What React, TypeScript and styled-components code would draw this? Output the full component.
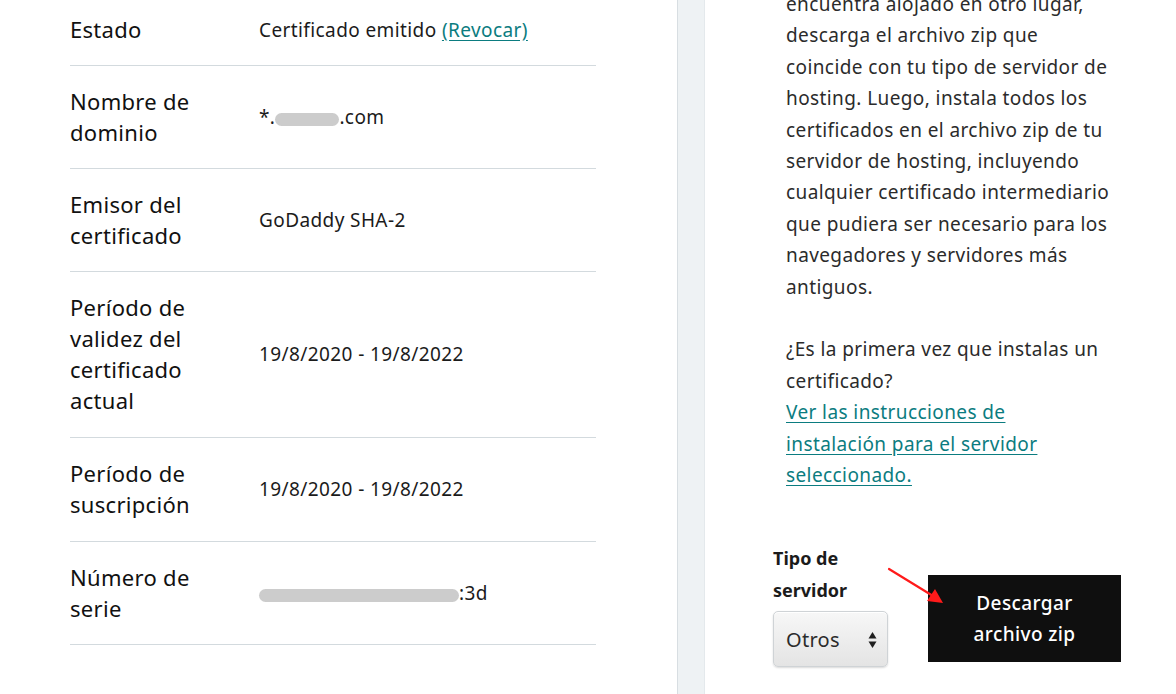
import styled, { createGlobalStyle } from "styled-components";

const GlobalStyle = createGlobalStyle`
  html, body {
    margin: 0;
    padding: 0;
    background: #ffffff;
    overflow: hidden;
  }
  body {
    font-family: "Noto Sans", "Liberation Sans", sans-serif;
    color: #111111;
  }
`;

const Page = styled.div`
  display: flex;
  height: 694px;
  overflow: hidden;
`;

const DetailsPanel = styled.section`
  flex: 0 0 677px;
  box-sizing: border-box;
  padding: 0 81px 0 70px;
`;

const DetailsList = styled.div`
  margin-top: -6px;
`;

const Row = styled.div<{ $tall?: boolean }>`
  display: grid;
  grid-template-columns: 189px 1fr;
  align-items: center;
  padding: 20px 0 ${(p) => (p.$tall ? 21 : 20)}px;
  border-bottom: 1px solid #d3dade;
`;

const Label = styled.div`
  width: 150px;
  font-size: 22px;
  letter-spacing: 0.3px;
  line-height: 31px;
  color: #111111;
`;

const Value = styled.div`
  font-size: 19px;
  letter-spacing: 0.4px;
  line-height: 26px;
  color: #1b1b1b;
`;

const TextLink = styled.a`
  color: #0b7c80;
  text-decoration: underline;
  text-underline-offset: 3px;
  cursor: pointer;
`;

const Redacted = styled.span<{ $width: number }>`
  display: inline-block;
  width: ${(p) => p.$width}px;
  height: 13px;
  border-radius: 7px;
  background: #cccccc;
  vertical-align: -2px;
`;

const Divider = styled.div`
  flex: 0 0 28px;
  background: #eef2f4;
  border-left: 1px solid #d8dee2;
  border-right: 1px solid #e4e9ec;
  box-sizing: border-box;
`;

const InstallPanel = styled.section`
  position: relative;
  flex: 1;
  padding-left: 68px;
`;

const Copy = styled.div`
  padding-left: 13px;
  margin-top: -11px;
  font-size: 19px;
  letter-spacing: 0.4px;
  line-height: 31.4px;
  color: #2b2b2b;
`;

const Paragraph = styled.p`
  margin: 0 0 31.4px;
`;

const FormRow = styled.div`
  display: flex;
  align-items: flex-end;
  gap: 40px;
  margin-top: 51px;
`;

const Field = styled.label`
  display: flex;
  flex-direction: column;
  width: 115px;
`;

const FieldLabel = styled.span`
  font-size: 18px;
  line-height: 32px;
  font-weight: 700;
  color: #1b1b1b;
  margin-bottom: 5px;
`;

const SelectBox = styled.div`
  position: relative;
  height: 56px;
  box-sizing: border-box;
  border: 1px solid #cfd3d6;
  border-radius: 5px;
  background: linear-gradient(#f7f7f7, #e4e4e4);
  box-shadow: inset 0 1px 0 #ffffff, 0 1px 2px rgba(0, 0, 0, 0.15);
`;

const Select = styled.select`
  appearance: none;
  width: 100%;
  height: 100%;
  border: none;
  background: transparent;
  padding: 0 0 0 12px;
  font-family: inherit;
  font-size: 20px;
  letter-spacing: 0.3px;
  color: #2b2b2b;
  outline: none;
`;

const Chevrons = styled.svg`
  position: absolute;
  right: 10px;
  top: 18px;
  pointer-events: none;
`;

const DownloadButton = styled.button`
  width: 193px;
  height: 87px;
  margin-bottom: 5px;
  border: none;
  background: #0f0f0f;
  color: #ffffff;
  font-family: inherit;
  font-size: 19px;
  letter-spacing: 0.4px;
  font-weight: 500;
  line-height: 31px;
  padding: 0 26px;
  cursor: pointer;
`;

const Annotation = styled.svg`
  position: absolute;
  left: 182px;
  top: 566px;
  pointer-events: none;
`;

export default function App() {
  return (
    <>
      <GlobalStyle />
      <Page>
        <DetailsPanel>
          <DetailsList>
            <Row>
              <Label>Estado</Label>
              <Value>
                Certificado emitido <TextLink>(Revocar)</TextLink>
              </Value>
            </Row>
            <Row>
              <Label>Nombre de dominio</Label>
              <Value>
                *.<Redacted $width={64} />.com
              </Value>
            </Row>
            <Row>
              <Label>Emisor del certificado</Label>
              <Value>GoDaddy SHA-2</Value>
            </Row>
            <Row $tall>
              <Label>Período de validez del certificado actual</Label>
              <Value>19/8/2020 - 19/8/2022</Value>
            </Row>
            <Row $tall>
              <Label>Período de suscripción</Label>
              <Value>19/8/2020 - 19/8/2022</Value>
            </Row>
            <Row>
              <Label>Número de serie</Label>
              <Value>
                <Redacted $width={200} />:3d
              </Value>
            </Row>
          </DetailsList>
        </DetailsPanel>

        <Divider />

        <InstallPanel>
          <Copy>
            <Paragraph>
              encuentra alojado en otro lugar,
              <br />
              descarga el archivo zip que
              <br />
              coincide con tu tipo de servidor de
              <br />
              hosting. Luego, instala todos los
              <br />
              certificados en el archivo zip de tu
              <br />
              servidor de hosting, incluyendo
              <br />
              cualquier certificado intermediario
              <br />
              que pudiera ser necesario para los
              <br />
              navegadores y servidores más
              <br />
              antiguos.
            </Paragraph>
            <Paragraph>
              ¿Es la primera vez que instalas un
              <br />
              certificado?
              <br />
              <TextLink>
                Ver las instrucciones de
                <br />
                instalación para el servidor
                <br />
                seleccionado.
              </TextLink>
            </Paragraph>
          </Copy>

          <FormRow>
            <Field>
              <FieldLabel>Tipo de servidor</FieldLabel>
              <SelectBox>
                <Select defaultValue="otros">
                  <option value="otros">Otros</option>
                  <option value="apache">Apache</option>
                  <option value="iis">IIS</option>
                  <option value="nginx">Nginx</option>
                </Select>
                <Chevrons width="9" height="20" viewBox="0 0 9 20">
                  <path d="M4.5 2 L8.5 8.5 L0.5 8.5 Z" fill="#1f1f1f" />
                  <path d="M4.5 18 L8.5 11.5 L0.5 11.5 Z" fill="#1f1f1f" />
                </Chevrons>
              </SelectBox>
            </Field>
            <DownloadButton>Descargar archivo zip</DownloadButton>
          </FormRow>

          <Annotation width="64" height="44" viewBox="0 0 64 44">
            <line x1="2" y1="3" x2="46" y2="30" stroke="#ff1a1a" strokeWidth="2.2" strokeLinecap="round" />
            <path d="M56 37 L40 35 L48 23 Z" fill="#ff1a1a" />
          </Annotation>
        </InstallPanel>
      </Page>
    </>
  );
}
